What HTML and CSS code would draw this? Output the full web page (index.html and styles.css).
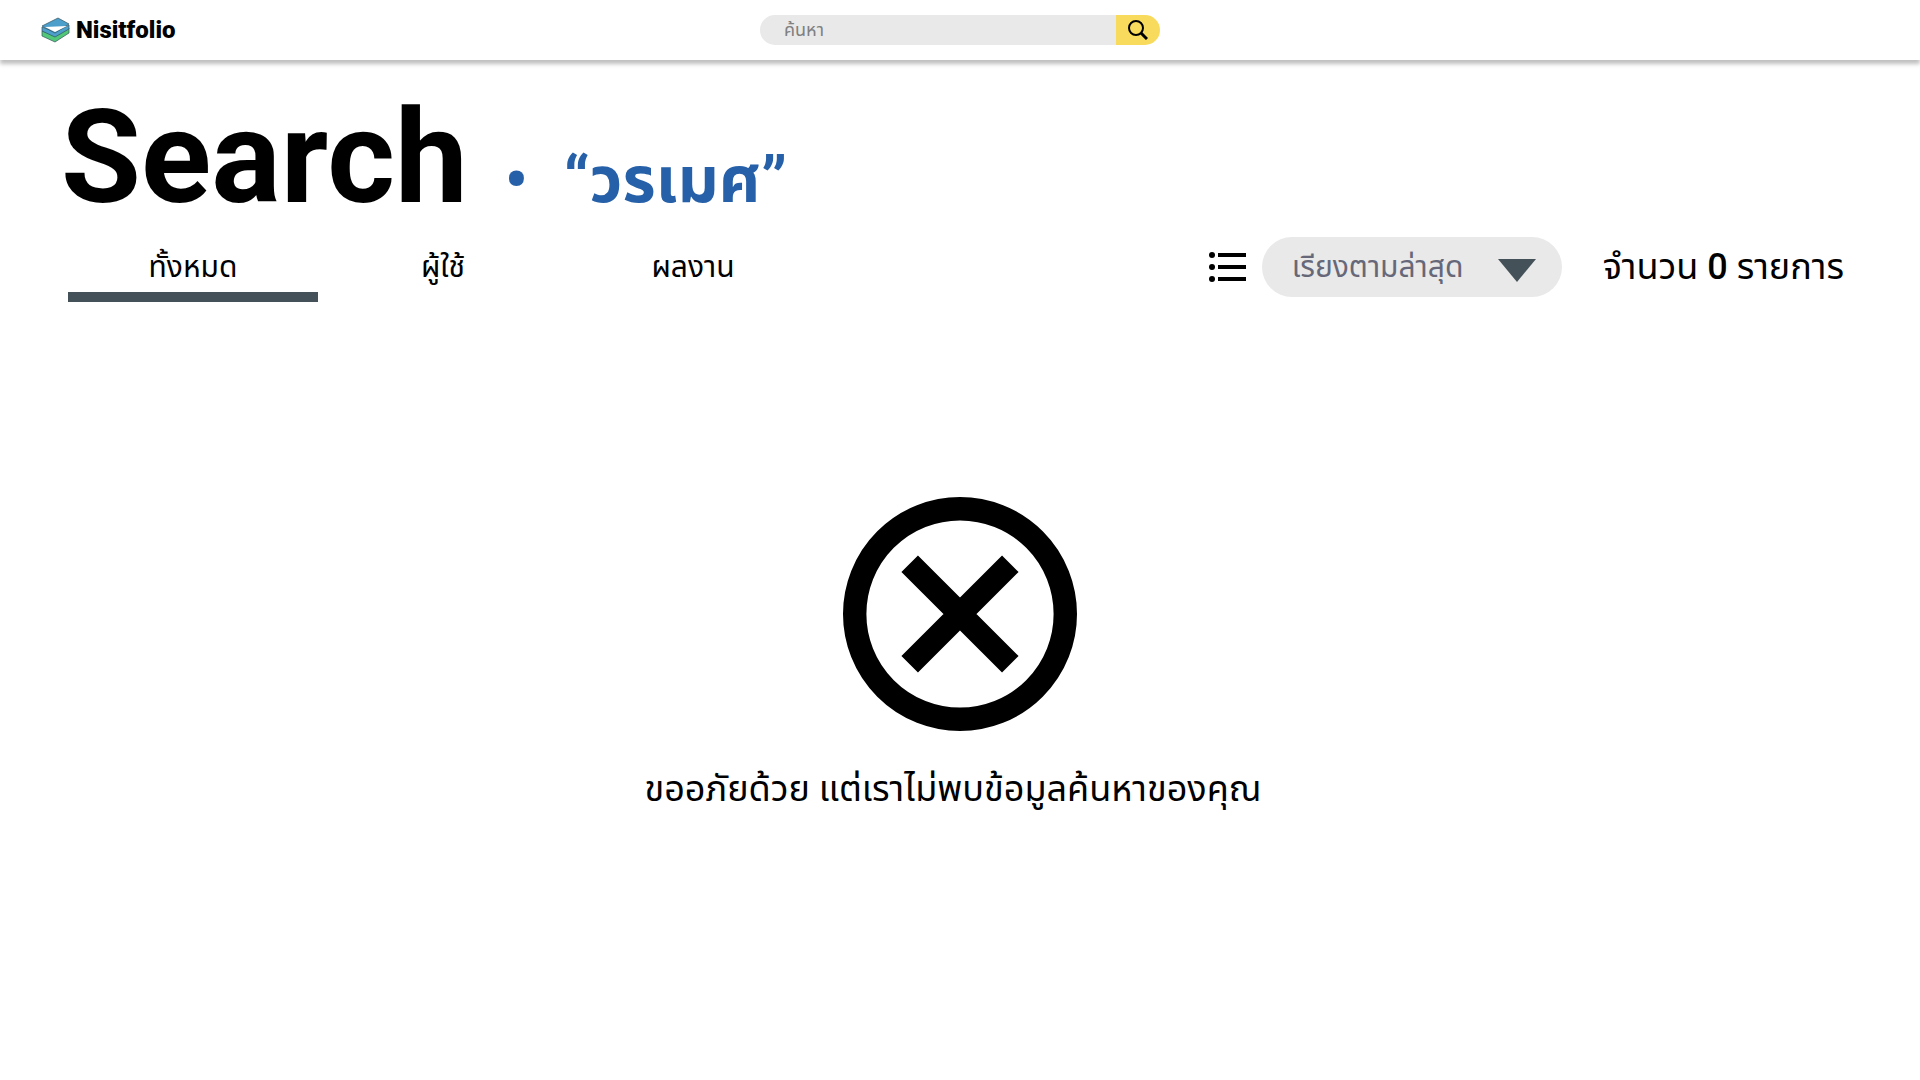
FILE: index.html
```html
<!DOCTYPE html>
<html lang="th">
<head>
<meta charset="utf-8">
<meta name="viewport" content="width=device-width, initial-scale=1">
<title>Nisitfolio</title>
<link rel="stylesheet" href="styles.css">
</head>
<body>
<header class="navbar">
  <a class="brand" href="#">
    <svg class="brand-icon" viewBox="0 0 30 26" aria-hidden="true">
      <path d="M2 14v5l13 6 14-9v-5L15 18z" fill="#51c878" stroke="#34515f" stroke-width=".7" stroke-linejoin="round"/>
      <path d="M2 10v4l13 6 14-8V8L15 15z" fill="#4b9fca" stroke="#34515f" stroke-width=".7" stroke-linejoin="round"/>
      <path d="M2 9L18 1l11 6-14 9z" fill="#4b9fca" stroke="#34515f" stroke-width=".7" stroke-linejoin="round"/>
      <path d="M5 10l22-1-12 6z" fill="#fff"/>
    </svg>
    <span>Nisitfolio</span>
  </a>
  <form class="search" role="search">
    <input class="search-input" type="search" placeholder="ค้นหา" aria-label="ค้นหา">
    <button class="search-button" type="button" aria-label="ค้นหา">
      <svg class="search-icon" viewBox="0 0 20 20" fill="none" stroke="#000" aria-hidden="true">
        <circle cx="8" cy="8" r="7" stroke-width="2"/>
        <path d="M13 13l6 6" stroke-width="3"/>
      </svg>
    </button>
  </form>
</header>
<main class="page">
  <div class="heading">
    <h1 class="title">Search</h1>
    <h2 class="query"><span class="bullet">•</span>“วรเมศ”</h2>
  </div>
  <div class="toolbar">
    <nav class="tabs">
      <a class="tab tab-active" href="#">ทั้งหมด</a>
      <a class="tab" href="#">ผู้ใช้</a>
      <a class="tab" href="#">ผลงาน</a>
    </nav>
    <div class="filters">
      <svg class="list-icon" viewBox="0 0 38 30" aria-hidden="true">
        <circle cx="3" cy="3" r="3"/><circle cx="3" cy="15" r="3"/><circle cx="3" cy="27" r="3"/>
        <path d="M9 1h28v4H9zM9 13h28v4H9zM9 25h28v4H9z"/>
      </svg>
      <div class="sort">
        <select class="sort-select" aria-label="เรียงลำดับ">
          <option>เรียงตามล่าสุด</option>
        </select>
        <svg class="sort-arrow" viewBox="0 0 38 23" aria-hidden="true"><path d="M0 0h38L19 23z"/></svg>
      </div>
      <p class="count">จำนวน <span class="count-number">0</span> รายการ</p>
    </div>
  </div>
  <section class="empty">
    <svg class="empty-icon" viewBox="0 0 20 20" fill="none" stroke="#000" stroke-width="2" aria-hidden="true">
      <circle cx="10" cy="10" r="9"/>
      <path d="M5.7 5.7l8.6 8.6M14.3 5.7l-8.6 8.6"/>
    </svg>
    <p class="empty-text">ขออภัยด้วย แต่เราไม่พบข้อมูลค้นหาของคุณ</p>
  </section>
</main>
</body>
</html>
```
FILE: styles.css
```css
* { box-sizing: border-box; }

body {
  margin: 0;
  background: #fff;
  color: #000;
  font-family: Roboto, "Noto Sans Thai", "Noto Sans", sans-serif;
}

h1, h2, p { margin: 0; }
a { color: inherit; text-decoration: none; }

.navbar {
  display: grid;
  grid-template-columns: 1fr 400px 1fr;
  align-items: center;
  height: 60px;
  padding: 0 40px;
  box-shadow: 0 4px 4px rgba(0, 0, 0, 0.25);
}

.brand {
  display: flex;
  align-items: center;
  gap: 6px;
  font-size: 24px;
  font-weight: 900;
}

.brand-icon { width: 30px; height: 26px; }

.search {
  display: flex;
  height: 30px;
  border-radius: 15px;
  overflow: hidden;
}

.search-input {
  flex: 1;
  min-width: 0;
  padding: 0 24px 2px;
  border: 0;
  background: #e9e9e9;
  font-family: inherit;
  font-size: 18px;
}

.search-input::placeholder { color: #808080; }

.search-button {
  display: flex;
  align-items: center;
  justify-content: center;
  width: 44px;
  padding: 0;
  border: 0;
  background: #f8db5c;
}

.search-icon { width: 20px; height: 20px; }

.page { padding: 26px 76px 40px 61px; }

.heading {
  display: flex;
  align-items: baseline;
  gap: 37px;
}

.title {
  font-size: 130px;
  line-height: 144px;
  font-weight: 700;
}

.query {
  color: #2660a8;
  font-size: 64px;
  line-height: 80px;
  font-weight: 700;
}

.bullet { margin-right: 36px; }

.toolbar {
  display: flex;
  justify-content: space-between;
  align-items: flex-start;
  padding: 7px 0 0 7px;
}

.tabs { display: flex; }

.tab {
  width: 250px;
  height: 65px;
  border-bottom: 10px solid transparent;
  font-size: 30px;
  line-height: 60px;
  text-align: center;
}

.tab-active { border-color: #455158; }

.filters {
  display: flex;
  align-items: center;
}

.list-icon { width: 38px; height: 30px; margin-right: 15px; }

.sort {
  display: grid;
  align-items: center;
  width: 300px;
  height: 60px;
  margin-right: 41px;
}

.sort-select,
.sort-arrow { grid-area: 1 / 1; }

.sort-select {
  appearance: none;
  width: 100%;
  height: 60px;
  padding: 0 30px 2px;
  border: 0;
  border-radius: 30px;
  background: #e9e9e9;
  color: #666879;
  font-family: inherit;
  font-size: 30px;
}

.sort-arrow {
  justify-self: end;
  width: 38px;
  height: 23px;
  margin: 6px 26px 0 0;
  fill: #455158;
  pointer-events: none;
}

.count {
  font-size: 36px;
  line-height: 60px;
}

.count-number { font-weight: 500; }

.empty {
  display: flex;
  flex-direction: column;
  align-items: center;
  padding: 195px 0 0 15px;
}

.empty-icon { width: 234px; height: 234px; }

.empty-text {
  margin-top: 28px;
  padding-right: 14px;
  font-size: 36px;
  line-height: 60px;
}
```
